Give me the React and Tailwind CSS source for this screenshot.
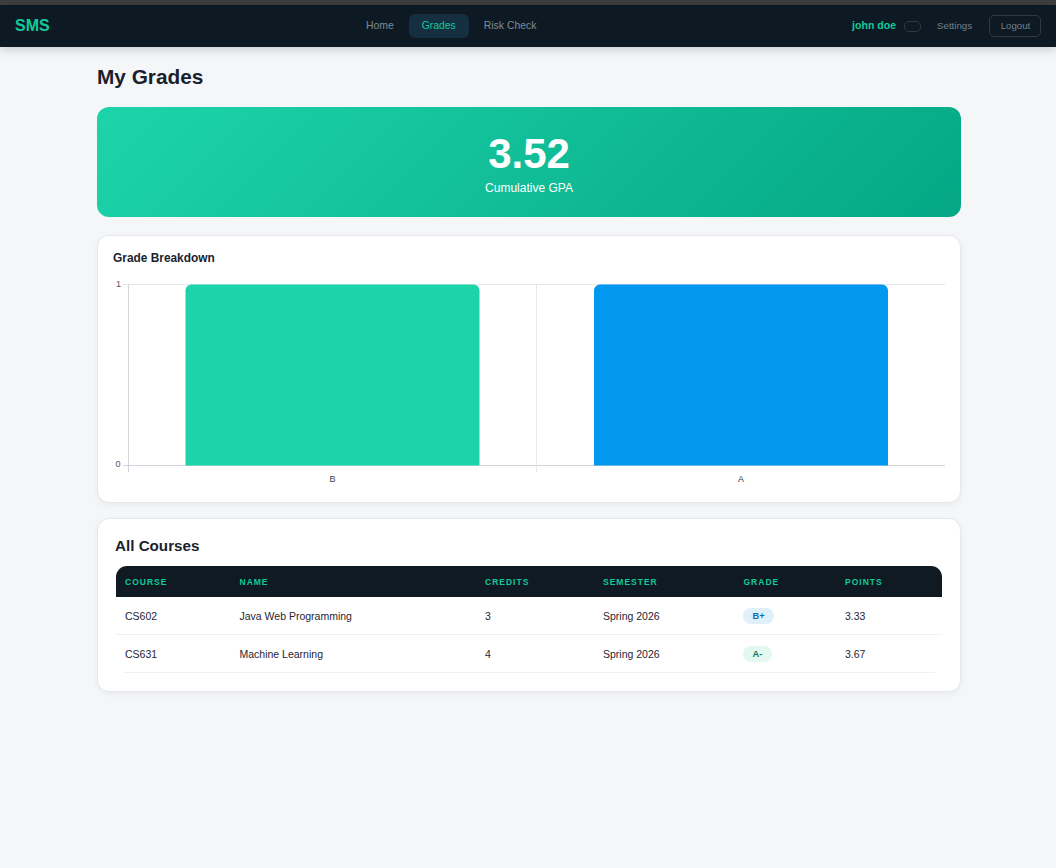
const font = "font-['Liberation_Sans',Arial,sans-serif]";

function Chart() {
  return (
    <svg width="833" height="210" viewBox="0 0 833 210" className="block">
      <g stroke="#e5e7eb" strokeWidth="1" shapeRendering="crispEdges">
        <line x1="11" y1="8.5" x2="833" y2="8.5" />
        <line x1="424.5" y1="8" x2="424.5" y2="189.5" />
      </g>
      <g stroke="#d1d5db" strokeWidth="1" shapeRendering="crispEdges">
        <line x1="16.5" y1="8" x2="16.5" y2="196" />
        <line x1="11" y1="189.5" x2="833" y2="189.5" />
        <line x1="424.5" y1="189" x2="424.5" y2="196" stroke="#e5e7eb" />
      </g>
      <path d="M73.5 189.5V14.5a6 6 0 0 1 6-6h282a6 6 0 0 1 6 6V189.5Z" fill="#1dd4aa" />
      <path d="M482 189.5V14.5a6 6 0 0 1 6-6h282a6 6 0 0 1 6 6V189.5Z" fill="#0398f0" />
      <g fontFamily="'Liberation Sans',Arial,sans-serif" fontSize="9">
        <text x="9" y="10.5" textAnchor="end" fill="#4b5563">1</text>
        <text x="8.5" y="190.5" textAnchor="end" fill="#4b5563">0</text>
        <text x="220.5" y="205.5" textAnchor="middle" fill="#374151">B</text>
        <text x="629" y="205.5" textAnchor="middle" fill="#374151">A</text>
      </g>
    </svg>
  );
}

const rows = [
  { c: "CS602", n: "Java Web Programming", cr: "3", s: "Spring 2026", g: "B+", gc: "bg-[#e0f0fb] text-[#0b6fb8]", p: "3.33" },
  { c: "CS631", n: "Machine Learning", cr: "4", s: "Spring 2026", g: "A-", gc: "bg-[#e3f8f1] text-[#067a5c]", p: "3.67" },
];
const heads = ["Course", "Name", "Credits", "Semester", "Grade", "Points"];
const widths = ["w-[114.5px]", "w-[245.5px]", "w-[118px]", "w-[140.5px]", "w-[101.5px]", "w-[106px]"];

export default function App() {
  return (
    <div className={`${font} min-h-[868px] bg-[#f4f6f8] text-[#1a1f2e]`}>
      <div className="h-[5px] bg-[#3f3f3f]" />
      <nav className="relative flex h-[42px] items-center justify-between bg-[#0d1a23] pl-[15px] pr-[15px] shadow-[0_2px_10px_rgba(0,0,0,0.2)]">
        <span className="text-[16px] font-bold text-[#12c99b]">SMS</span>
        <div className="absolute left-[353px] top-[9px] flex items-center gap-[2px] text-[10.4px] text-[#7d8b99]">
          <a className="rounded-[6px] px-[13px] py-[6px] leading-[12px]">Home</a>
          <a className="rounded-[6px] bg-[#162f40] px-[13px] py-[6px] leading-[12px] text-[#12c99b]">Grades</a>
          <a className="rounded-[6px] px-[13px] py-[6px] leading-[12px]">Risk Check</a>
        </div>
        <div className="flex items-center">
          <span className="text-[10.56px] font-bold text-[#12c99b]">john doe</span>
          <span className="ml-[8px] h-[11px] w-[17px] rounded-[5px] border border-[#2c3a46]" />
          <span className="ml-[16px] text-[9.68px] text-[#71808e]">Settings</span>
          <button className="ml-[17px] h-[22px] w-[52px] rounded-[5px] border border-[#2c3a46] pl-[1px] text-[9.68px] text-[#71808e]">Logout</button>
        </div>
      </nav>

      <main className="ml-[97px] w-[864px] pt-[18px]">
        <h1 className="text-[20.8px] font-bold leading-[24px] text-[#1a1f2e]">My Grades</h1>

        <section className="mt-[18px] flex h-[110px] flex-col items-center rounded-[12px] bg-[linear-gradient(135deg,#1dd4aa,#05a785)] text-white">
          <div className="mt-[23px] text-[42px] font-bold leading-[48px]">3.52</div>
          <div className="mt-[3px] text-[12px] leading-[14px]">Cumulative GPA</div>
        </section>

        <section className="mt-[18px] h-[268px] rounded-[12px] border border-[#e5e8ee] bg-white pl-[15px] pt-[15px] shadow-[0_2px_6px_rgba(0,0,0,0.05)]">
          <h2 className="text-[11.9px] font-bold leading-[14px] text-[#1a1f2e]">Grade Breakdown</h2>
          <div className="-ml-[1px] mt-[11px]">
            <Chart />
          </div>
        </section>

        <section className="mt-[15px] h-[174px] rounded-[12px] border border-[#e5e8ee] bg-white px-[18px] pt-[18px] shadow-[0_2px_6px_rgba(0,0,0,0.05)]">
          <h2 className="-ml-[1px] text-[15.2px] font-bold leading-[18px] text-[#1a1f2e]">All Courses</h2>
          <table className="mt-[11px] w-[826px] table-fixed border-separate border-spacing-0">
            <thead>
              <tr className="h-[31px] bg-[#0f1a23]">
                {heads.map((h, i) => (
                  <th
                    key={h}
                    className={`${widths[i]} pl-[9px] pt-[1px] text-left text-[8.5px] font-bold uppercase tracking-[1px] text-[#12c99b] ${i === 0 ? "rounded-tl-[11px]" : ""} ${i === 5 ? "rounded-tr-[11px]" : ""}`}
                  >
                    {h}
                  </th>
                ))}
              </tr>
            </thead>
            <tbody className="text-[10.5px] text-[#1f2533]">
              {rows.map((r, idx) => {
                const cell = idx === 0 ? "h-[38px] pl-[9px] border-b border-[#eff1f5]" : "h-[37px] pl-[9px]";
                return (
                  <tr key={r.c}>
                    <td className={`${cell} pt-[2px]`}>{r.c}</td>
                    <td className={`${cell} pt-[2px]`}>{r.n}</td>
                    <td className={`${cell} pt-[2px]`}>{r.cr}</td>
                    <td className={`${cell} pt-[2px]`}>{r.s}</td>
                    <td className={cell}>
                      <span className={`-ml-[0.5px] inline-block rounded-full px-[9.5px] text-[9.2px] font-bold leading-[16px] ${r.gc}`}>{r.g}</span>
                    </td>
                    <td className={`${cell} pt-[2px]`}>{r.p}</td>
                  </tr>
                );
              })}
            </tbody>
          </table>
          <div className="ml-[8px] mr-[7px] h-px bg-[#eff1f5]" />
        </section>
      </main>
    </div>
  );
}
